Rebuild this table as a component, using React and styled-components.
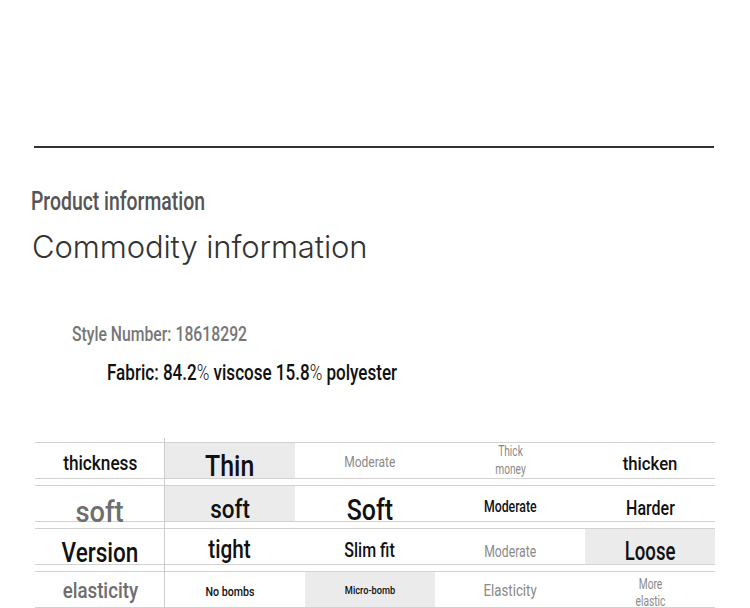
import React from "react";
import styled, { createGlobalStyle } from "styled-components";

const Global = createGlobalStyle`
  html, body { margin: 0; padding: 0; background: #fff; }
  body { width: 750px; height: 608px; overflow: hidden; }
`;

// s: font size, sx: horizontal squeeze, dy: baseline nudge, w: weight
const rows = [
  [
    { t: "thickness", s: 21, sx: 0.82, dy: 2, c: "#111" },
    { t: "Thin", s: 30, sx: 0.83, dy: 4.5, c: "#111", hi: true },
    { t: "Moderate", s: 14, sx: 0.86, dy: 1, c: "#8a8a8a", w: 400 },
    { t: "Thick money", s: 15, sx: 0.68, dy: 0, c: "#8a8a8a", w: 400, lines: true },
    { t: "thicken", s: 19, sx: 0.88, dy: 3, c: "#111" },
  ],
  [
    { t: "soft", s: 30, sx: 0.91, dy: 7.5, c: "#6e6e6e" },
    { t: "soft", s: 25, sx: 0.9, dy: 6, c: "#111", hi: true },
    { t: "Soft", s: 30, sx: 0.83, dy: 6, c: "#111" },
    { t: "Moderate", s: 16, sx: 0.77, dy: 3, c: "#111" },
    { t: "Harder", s: 20, sx: 0.8, dy: 3.7, c: "#111" },
  ],
  [
    { t: "Version", s: 27, sx: 0.835, dy: 5.6, c: "#111" },
    { t: "tight", s: 25, sx: 0.83, dy: 3, c: "#111" },
    { t: "Slim fit", s: 20, sx: 0.8, dy: 3, c: "#111" },
    { t: "Moderate", s: 17, sx: 0.72, dy: 4, c: "#8a8a8a", w: 400 },
    { t: "Loose", s: 25, sx: 0.745, dy: 4.7, c: "#111", hi: true },
  ],
  [
    { t: "elasticity", s: 22, sx: 0.85, dy: 1, c: "#6e6e6e" },
    { t: "No bombs", s: 13, sx: 0.82, dy: 2.4, c: "#111" },
    { t: "Micro-bomb", s: 11, sx: 0.84, dy: 1.4, c: "#111", hi: true },
    { t: "Elasticity", s: 16, sx: 0.83, dy: 1.3, c: "#8a8a8a", w: 400 },
    { t: "More elastic", s: 14, sx: 0.73, dy: 2.7, c: "#8a8a8a", w: 400, lines: true, lh: 18 },
  ],
];

export default function App() {
  return (
    <>
      <Global />
      <Page>
        <Rule />
        <Kicker>
          <Squeeze $sx={0.775}>Product information</Squeeze>
        </Kicker>
        <Title>Commodity information</Title>
        <StyleNo>
          <Squeeze $sx={0.75}>Style Number: 18618292</Squeeze>
        </StyleNo>
        <Fabric>
          <Squeeze $sx={0.775}>
            Fabric: 84.2<Pct>%</Pct> viscose 15.8<Pct>%</Pct> polyester
          </Squeeze>
        </Fabric>
        <Table>
          <Divider />
          {rows.map((r, i) => (
            <Row key={i}>
              {r.map((c, j) => (
                <Cell key={j} $hi={c.hi} $gap={j >= 2}>
                  <CellText
                    $size={c.s}
                    $color={c.c}
                    $weight={c.w || 500}
                    $lh={c.lh || 17}
                    style={{ transform: `translateY(${c.dy}px) scaleX(${c.sx})` }}
                  >
                    {c.lines
                      ? c.t.split(" ").map((word, k) => <Line key={k}>{word}</Line>)
                      : c.t}
                  </CellText>
                </Cell>
              ))}
            </Row>
          ))}
        </Table>
      </Page>
    </>
  );
}

const Page = styled.div`
  padding: 146px 36px 0 34px;
  font-family: Roboto, "Liberation Sans", sans-serif;
`;

const Rule = styled.div`
  width: 680px;
  height: 2px;
  background: #333;
`;

const Squeeze = styled.span`
  display: inline-block;
  white-space: nowrap;
  transform-origin: left center;
  transform: scaleX(${(p) => p.$sx});
`;

const Pct = styled.span`
  font-weight: 300;
`;

const Kicker = styled.div`
  margin-top: 39px;
  margin-left: -3px;
  height: 30px;
  font-size: 25px;
  line-height: 30px;
  font-weight: 500;
  color: #555;
`;

const Title = styled.div`
  margin-top: 10px;
  margin-left: -2px;
  font-family: Inter, "Open Sans", sans-serif;
  font-weight: 300;
  font-size: 31px;
  line-height: 40px;
  letter-spacing: -0.1px;
  color: #333;
`;

const StyleNo = styled.div`
  margin-top: 54px;
  margin-left: 38px;
  height: 26px;
  font-size: 21px;
  line-height: 26px;
  font-weight: 500;
  color: #777;
`;

const Fabric = styled.div`
  margin-top: 13px;
  margin-left: 73px;
  height: 26px;
  font-size: 22px;
  line-height: 26px;
  font-weight: 500;
  color: #111;
`;

const Table = styled.div`
  position: relative;
  margin-top: 56px;
  margin-left: 1px;
  width: 680px;
  display: flex;
  flex-direction: column;
  gap: 6px;
`;

const Divider = styled.div`
  position: absolute;
  left: 129px;
  top: -4px;
  bottom: -10px;
  width: 1px;
  background: #cdcdcd;
`;

const Row = styled.div`
  display: flex;
  height: 35px;
  border-top: 1px solid #d2d2d2;
  border-bottom: 1px solid #d2d2d2;
`;

const Cell = styled.div`
  width: 130px;
  margin-left: ${(p) => (p.$gap ? "10px" : "0")};
  display: flex;
  align-items: center;
  justify-content: center;
  background: ${(p) => (p.$hi ? "#ebebeb" : "transparent")};
`;

const CellText = styled.span`
  display: flex;
  flex-direction: column;
  align-items: center;
  flex-shrink: 0;
  font-size: ${(p) => p.$size}px;
  font-weight: ${(p) => p.$weight};
  line-height: normal;
  color: ${(p) => p.$color};
  white-space: nowrap;
  transform-origin: center center;
`;

const Line = styled.span`
  display: block;
  line-height: 17px;
  span + & {
    line-height: inherit;
  }
`;
